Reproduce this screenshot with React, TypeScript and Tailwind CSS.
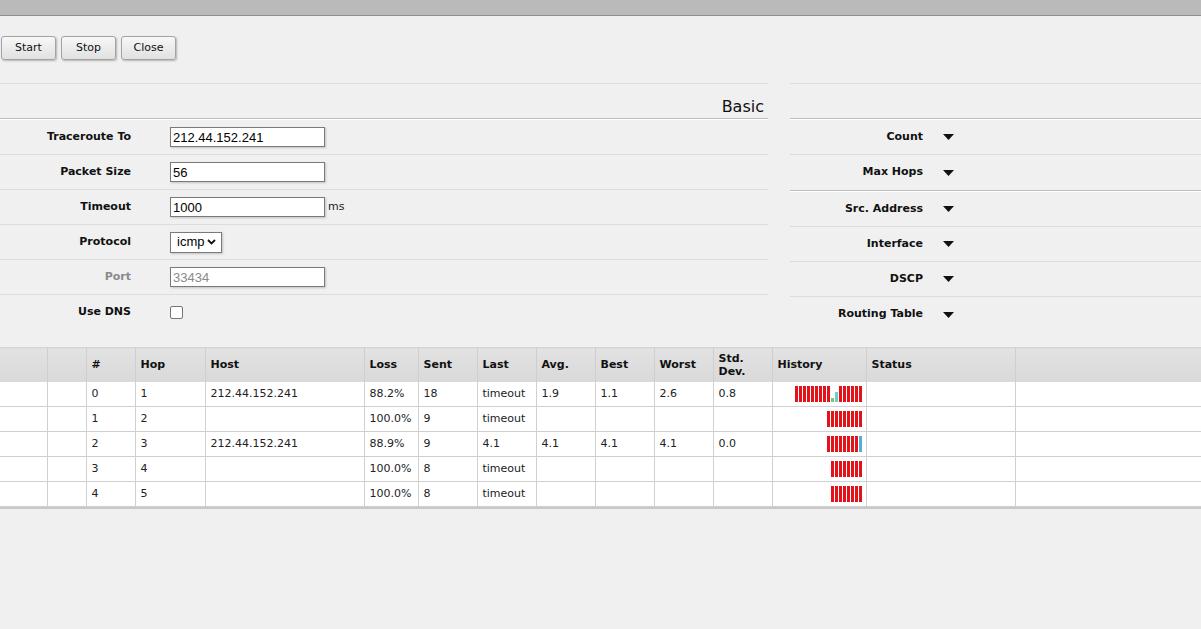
import React from 'react';

const verdana = { fontFamily: '"DejaVu Sans", Verdana, sans-serif' };
const arial = { fontFamily: '"Liberation Sans", Arial, sans-serif' };

type Hop = {
  n: number;
  hop: number;
  host: string;
  loss: string;
  sent: string;
  last: string;
  avg: string;
  best: string;
  worst: string;
  std: string;
  history: string; // r = lost, g/t/b = replies
};

const hops: Hop[] = [
  { n: 0, hop: 1, host: '212.44.152.241', loss: '88.2%', sent: '18', last: 'timeout', avg: '1.9', best: '1.1', worst: '2.6', std: '0.8', history: 'rrrrrrrrrgtrrrrrr' },
  { n: 1, hop: 2, host: '', loss: '100.0%', sent: '9', last: 'timeout', avg: '', best: '', worst: '', std: '', history: 'rrrrrrrrr' },
  { n: 2, hop: 3, host: '212.44.152.241', loss: '88.9%', sent: '9', last: '4.1', avg: '4.1', best: '4.1', worst: '4.1', std: '0.0', history: 'rrrrrrrrb' },
  { n: 3, hop: 4, host: '', loss: '100.0%', sent: '8', last: 'timeout', avg: '', best: '', worst: '', std: '', history: 'rrrrrrrr' },
  { n: 4, hop: 5, host: '', loss: '100.0%', sent: '8', last: 'timeout', avg: '', best: '', worst: '', std: '', history: 'rrrrrrrr' },
];

function Button({ label }: { label: string }) {
  return (
    <button
      className="h-[24px] w-[55px] rounded-[3px] border border-[#a3a3a3] bg-gradient-to-b from-[#f7f7f7] to-[#e1e1e1] text-[11px] text-[#111] shadow-[1px_1px_2px_rgba(0,0,0,0.25)]"
      style={verdana}
    >
      {label}
    </button>
  );
}

function TextBox({ value, muted }: { value: string; muted?: boolean }) {
  return (
    <input
      readOnly
      value={value}
      className={`h-[20px] w-[155px] border border-[#7a7a7a] bg-white px-[2px] text-[13px] shadow-[1px_1px_2px_rgba(0,0,0,0.2)] outline-none ${muted ? 'text-[#8a8a8a]' : 'text-black'}`}
      style={arial}
    />
  );
}

function FormRow({ label, muted, last, children }: { label: string; muted?: boolean; last?: boolean; children: React.ReactNode }) {
  return (
    <div className={`flex h-[35px] items-center ${last ? '' : 'border-b border-[#dcdcdc]'}`}>
      <div className={`w-[131px] text-right text-[11px] font-bold ${muted ? 'text-[#8a8a8a]' : 'text-[#111]'}`} style={verdana}>
        {label}
      </div>
      <div className="ml-[39px] flex items-center">{children}</div>
    </div>
  );
}

function DropRow({ label, last }: { label: string; last?: boolean }) {
  return (
    <div className={`flex h-[35px] items-center ${last ? '' : 'border-b border-[#dcdcdc]'}`}>
      <div className="w-[133px] text-right text-[11px] font-bold text-[#111]" style={verdana}>
        {label}
      </div>
      <svg width="11" height="6" viewBox="0 0 11 6" className="ml-[20px]">
        <path d="M0 0 H11 L5.5 6 Z" fill="#111" />
      </svg>
    </div>
  );
}

function Etched() {
  return (
    <div>
      <div className="h-px bg-[#bdbdbd]" />
      <div className="h-px bg-white" />
    </div>
  );
}

function History({ pattern }: { pattern: string }) {
  return (
    <div className="flex h-[16px] items-end justify-end gap-px">
      {pattern.split('').map((c, i) => {
        if (c === 'g') return <div key={i} className="h-[4px] w-[3px] bg-[#7dc47d]" />;
        if (c === 't') return <div key={i} className="h-[10px] w-[3px] bg-[#6dd0c4]" />;
        if (c === 'b') return <div key={i} className="h-[16px] w-[3px] bg-[#4db2d6]" />;
        return <div key={i} className="h-[16px] w-[3px] bg-[#e31419]" />;
      })}
    </div>
  );
}

const th = 'border-r border-[#cfcfcf] bg-gradient-to-b from-[#e2e2e2] to-[#d9d9d9] px-[5px] text-left align-middle text-[11px] font-bold leading-[13px] text-[#111]';
const td = 'h-[25px] border-r border-b border-[#d0d0d0] bg-white px-[5px] text-[11px] text-[#222]';

export default function App() {
  return (
    <div className="min-h-[629px] w-[1201px] bg-[#f0f0f0]" style={verdana}>
      <div className="h-[16px] border-b border-[#8e8e8e] bg-[#bababa]" />

      <div className="flex gap-[5px] pl-px pt-[20px]">
        <Button label="Start" />
        <Button label="Stop" />
        <Button label="Close" />
      </div>

      <div className="mt-[23px] flex">
        <div className="w-[768px]">
          <div className="h-px bg-[#dcdcdc]" />
          <div className="flex h-[34px] items-end justify-end pb-[3px] pr-[4px] text-[16px] leading-[16px] text-[#111]" style={verdana}>
            Basic
          </div>
          <Etched />
          <FormRow label="Traceroute To">
            <TextBox value="212.44.152.241" />
          </FormRow>
          <FormRow label="Packet Size">
            <TextBox value="56" />
          </FormRow>
          <FormRow label="Timeout">
            <TextBox value="1000" />
            <span className="ml-[3px] text-[11px] text-[#222]" style={verdana}>ms</span>
          </FormRow>
          <FormRow label="Protocol">
            <div
              className="flex h-[21px] w-[52px] items-center justify-between border border-[#7a7a7a] bg-white pl-[6px] pr-[5px] text-[13px] text-black shadow-[1px_1px_2px_rgba(0,0,0,0.2)]"
              style={arial}
            >
              <span>icmp</span>
              <svg width="9" height="6" viewBox="0 0 9 6">
                <path d="M1 1 L4.5 4.5 L8 1" fill="none" stroke="#111" strokeWidth="1.8" />
              </svg>
            </div>
          </FormRow>
          <FormRow label="Port" muted>
            <TextBox value="33434" muted />
          </FormRow>
          <FormRow label="Use DNS" last>
            <div className="h-[13px] w-[13px] rounded-[2px] border border-[#767676] bg-white" />
          </FormRow>
        </div>

        <div className="ml-[22px] flex-1">
          <div className="h-px bg-[#dcdcdc]" />
          <div className="h-[34px]" />
          <Etched />
          <DropRow label="Count" />
          <DropRow label="Max Hops" last />
          <Etched />
          <DropRow label="Src. Address" />
          <DropRow label="Interface" />
          <DropRow label="DSCP" />
          <DropRow label="Routing Table" last />
        </div>
      </div>

      <div className="mt-[15px] shadow-[0_2px_0_#c8c8c8]">
        <table className="w-[1201px] table-fixed border-collapse">
          <colgroup>
            <col className="w-[47px]" />
            <col className="w-[39px]" />
            <col className="w-[49px]" />
            <col className="w-[70px]" />
            <col className="w-[159px]" />
            <col className="w-[54px]" />
            <col className="w-[59px]" />
            <col className="w-[59px]" />
            <col className="w-[59px]" />
            <col className="w-[59px]" />
            <col className="w-[59px]" />
            <col className="w-[59px]" />
            <col className="w-[94px]" />
            <col className="w-[149px]" />
            <col />
          </colgroup>
          <thead>
            <tr className="h-[34px] border-t border-[#d6d6d6]">
              <th className={th}></th>
              <th className={th}></th>
              <th className={th}>#</th>
              <th className={th}>Hop</th>
              <th className={th}>Host</th>
              <th className={th}>Loss</th>
              <th className={th}>Sent</th>
              <th className={th}>Last</th>
              <th className={th}>Avg.</th>
              <th className={th}>Best</th>
              <th className={th}>Worst</th>
              <th className={th}>
                Std.
                <br />
                Dev.
              </th>
              <th className={th}>History</th>
              <th className={th}>Status</th>
              <th className="bg-gradient-to-b from-[#e2e2e2] to-[#d9d9d9]"></th>
            </tr>
          </thead>
          <tbody>
            {hops.map(h => (
              <tr key={h.n}>
                <td className={td}></td>
                <td className={td}></td>
                <td className={td}>{h.n}</td>
                <td className={td}>{h.hop}</td>
                <td className={td}>{h.host}</td>
                <td className={td}>{h.loss}</td>
                <td className={td}>{h.sent}</td>
                <td className={td}>{h.last}</td>
                <td className={td}>{h.avg}</td>
                <td className={td}>{h.best}</td>
                <td className={td}>{h.worst}</td>
                <td className={td}>{h.std}</td>
                <td className={`${td} pr-[4px]`}>
                  <History pattern={h.history} />
                </td>
                <td className={td}></td>
                <td className="h-[25px] border-b border-[#d0d0d0] bg-white"></td>
              </tr>
            ))}
          </tbody>
        </table>
      </div>
    </div>
  );
}
